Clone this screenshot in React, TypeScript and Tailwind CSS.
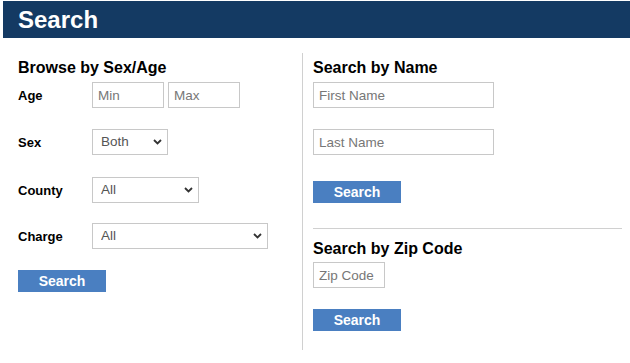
import React from 'react';

function Chevron() {
    return (
        <svg
            className="pointer-events-none absolute right-[6px] top-1/2 -translate-y-1/2"
            width="9"
            height="6"
            viewBox="0 0 9 6"
        >
            <path d="M1 1l3.5 3.5L8 1" fill="none" stroke="#333" strokeWidth="1.8" />
        </svg>
    );
}

function Select({ value, width }: { value: string; width: string }) {
    return (
        <div className={`relative h-[26px] ${width}`}>
            <select
                defaultValue={value}
                className="h-full w-full appearance-none border border-[#c8c8c8] bg-white pl-[8px] text-[13.5px] text-[#555] outline-none"
            >
                <option>{value}</option>
            </select>
            <Chevron />
        </div>
    );
}

function TextInput({ placeholder, width }: { placeholder: string; width: string }) {
    return (
        <input
            type="text"
            placeholder={placeholder}
            className={`h-[26px] border border-[#c8c8c8] bg-white px-[5px] text-[13.5px] text-[#333] outline-none placeholder:text-[#777] ${width}`}
        />
    );
}

function SearchButton({ className = '' }: { className?: string }) {
    return (
        <button className={`h-[22px] w-[88px] bg-[#4a7fc1] text-[14px] font-bold text-white ${className}`}>
            Search
        </button>
    );
}

export default function App() {
    return (
        <main className="h-[363px] w-[630px] overflow-hidden bg-white font-['Liberation_Sans',Arial,sans-serif] text-black">
            <header className="ml-[3px] mt-[1px] h-[37px] bg-[#143a63] pl-[15px] text-[24px] font-bold leading-[37px] text-white">
                Search
            </header>

            <div className="ml-[3px] mt-[15px] flex">
                {/* --- BROWSE --- */}
                <section className="h-[297px] w-[300px] border-r border-[#d0d0d0] pl-[15px]">
                    <h2 className="mt-[6px] text-[16px] font-bold leading-[18px]">Browse by Sex/Age</h2>

                    <div className="mt-[5px] flex items-center">
                        <label className="w-[74px] pt-[2px] text-[13px] font-bold">Age</label>
                        <div className="flex gap-[4px]">
                            <TextInput placeholder="Min" width="w-[72px]" />
                            <TextInput placeholder="Max" width="w-[72px]" />
                        </div>
                    </div>

                    <div className="mt-[21px] flex items-center">
                        <label className="w-[74px] pt-[2px] text-[13px] font-bold">Sex</label>
                        <Select value="Both" width="w-[76px]" />
                    </div>

                    <div className="mt-[22px] flex items-center">
                        <label className="w-[74px] pt-[2px] text-[13px] font-bold">County</label>
                        <Select value="All" width="w-[107px]" />
                    </div>

                    <div className="mt-[20px] flex items-center">
                        <label className="w-[74px] pt-[2px] text-[13px] font-bold">Charge</label>
                        <Select value="All" width="w-[176px]" />
                    </div>

                    <SearchButton className="mt-[21px] block" />
                </section>

                {/* --- NAME / ZIP --- */}
                <section className="flex flex-1 flex-col items-start pl-[10px] pr-[8px]">
                    <h2 className="mt-[6px] text-[16px] font-bold leading-[18px]">Search by Name</h2>
                    <div className="mt-[5px]">
                        <TextInput placeholder="First Name" width="w-[181px]" />
                    </div>
                    <div className="mt-[21px]">
                        <TextInput placeholder="Last Name" width="w-[181px]" />
                    </div>
                    <SearchButton className="mt-[26px]" />

                    <hr className="mt-[25px] w-full border-t border-[#d0d0d0]" />

                    <h2 className="mt-[11px] text-[16px] font-bold leading-[18px]">Search by Zip Code</h2>
                    <div className="mt-[4px]">
                        <TextInput placeholder="Zip Code" width="w-[72px]" />
                    </div>
                    <SearchButton className="mt-[21px]" />
                </section>
            </div>
        </main>
    );
}
